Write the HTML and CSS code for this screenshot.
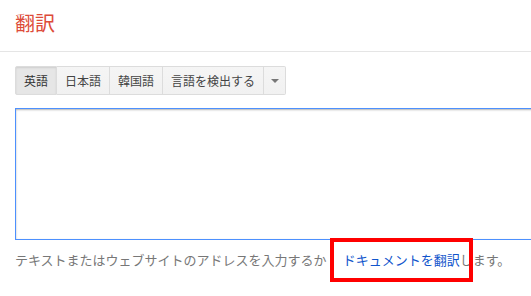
FILE: index.html
```html
<!DOCTYPE html>
<html lang="ja">
<head>
<meta charset="utf-8">
<link rel="stylesheet" href="styles.css">
</head>
<body>
<header class="header"><h1 class="title">翻訳</h1></header>
<main class="content">
  <div class="langbar">
    <button class="lang selected">英語</button><button class="lang">日本語</button><button class="lang">韓国語</button><button class="lang">言語を検出する</button><button class="lang drop"><span class="arrow"></span></button>
  </div>
  <div class="source"></div>
  <p class="hint">テキストまたはウェブサイトのアドレスを入力するか<span class="linkwrap"><a class="link" href="#">ドキュメントを翻訳</a></span>します。</p>
</main>
</body>
</html>
```
FILE: styles.css
```css
html {
  overflow: hidden;
}
body {
  margin: 0;
  padding: 0;
  min-height: 296px;
  background: #fff;
  font-family: "Noto Sans CJK JP", "Liberation Sans", sans-serif;
}
.header {
  height: 52px;
  border-bottom: 1px solid #e5e5e5;
  padding-left: 15px;
  display: flex;
  align-items: center;
  box-sizing: border-box;
}
.title {
  margin: 0;
  font-size: 20px;
  font-weight: normal;
  color: #dd4b39;
  line-height: 1;
  margin-top: -6px;
}
.content {
  padding: 14px 0 20px 15px;
  overflow: hidden;
}
.langbar {
  display: flex;
  height: 29px;
}
.lang {
  font-family: inherit;
  font-size: 12px;
  color: #444;
  background: linear-gradient(#f5f5f5, #f1f1f1);
  border: 1px solid #dcdcdc;
  border-left-width: 0;
  padding: 0 8px;
  margin: 0;
  height: 29px;
  line-height: 27px;
  box-sizing: border-box;
}
.lang:first-child {
  border-left-width: 1px;
  border-radius: 2px 0 0 2px;
}
.lang.selected {
  background: #e6e6e6;
  box-shadow: inset 0 1px 2px rgba(0,0,0,0.1);
  color: #333;
}
.lang.drop {
  width: 22px;
  padding: 0;
  border-radius: 0 2px 2px 0;
  display: flex;
  align-items: center;
  justify-content: center;
}
.arrow {
  width: 0;
  height: 0;
  border-left: 4px solid transparent;
  border-right: 4px solid transparent;
  border-top: 4px solid #777;
}
.source {
  margin-top: 13px;
  margin-right: -60px;
  height: 130px;
  border: 1px solid #4d90fe;
  box-shadow: inset 0 1px 2px rgba(0,0,0,0.3);
}
.hint {
  margin: 10px 0 0;
  font-size: 13px;
  line-height: 20px;
  color: #777;
  white-space: nowrap;
}
.linkwrap {
  position: relative;
  display: inline-block;
  vertical-align: top;
  margin-left: 16px;
}
.linkwrap::before {
  content: "";
  position: absolute;
  left: -13px;
  right: -13px;
  top: -12px;
  bottom: -12px;
  border: 4px solid #ff0000;
}
.link {
  color: #1155cc;
  text-decoration: none;
}
```
